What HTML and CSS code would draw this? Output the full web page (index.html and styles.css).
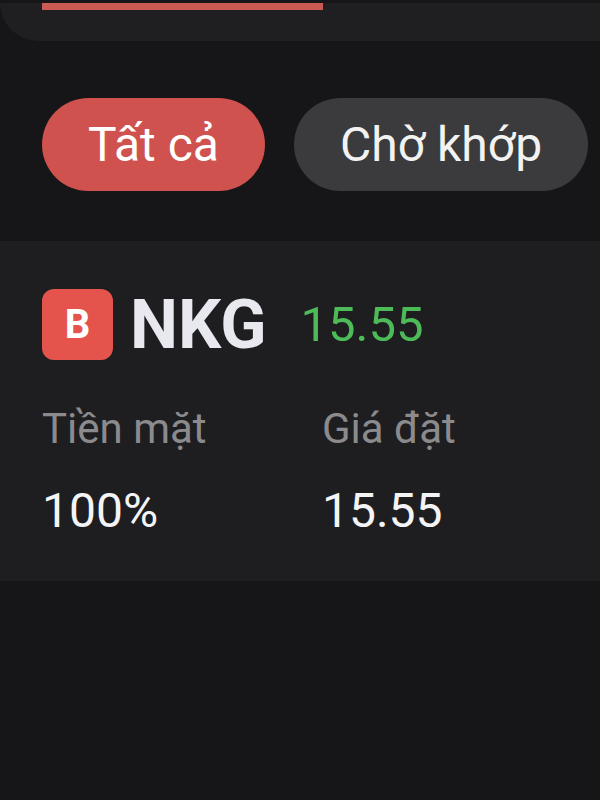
FILE: index.html
```html
<!DOCTYPE html>
<html lang="vi">
<head>
  <meta charset="UTF-8" />
  <meta name="viewport" content="width=device-width, initial-scale=1.0"/>
  <title>Lệnh đặt</title>
  <link rel="stylesheet" href="styles.css">
</head>
<body>
  <div class="tab-bar">
    <div class="tab-indicator"></div>
  </div>

  <div class="filters">
    <button class="pill active">Tất cả</button>
    <button class="pill">Chờ khớp</button>
  </div>

  <div class="order-card">
    <div class="order-head">
      <span class="side-badge">B</span>
      <span class="symbol">NKG</span>
      <span class="price">15.55</span>
    </div>
    <div class="order-grid">
      <div class="label">Tiền mặt</div>
      <div class="label">Giá đặt</div>
      <div class="value">100%</div>
      <div class="value">15.55</div>
    </div>
  </div>
</body>
</html>
```

FILE: styles.css
```css
body {
  font-family: Roboto, "Noto Sans", sans-serif;
  margin: 0;
  padding: 0;
  background: #161618;
  height: 800px;
  overflow: hidden;
}
.tab-bar {
  height: 38px;
  background: #1f1f22;
  border-bottom-left-radius: 40px;
  padding-left: 42px;
}
.tab-indicator {
  width: 281px;
  height: 7px;
  margin-top: 3px;
  background: #cb5a54;
}
.filters {
  display: flex;
  gap: 29px;
  padding: 57px 0 0 42px;
}
.pill {
  flex-shrink: 0;
  white-space: nowrap;
  height: 93px;
  padding: 0 46px;
  border: none;
  border-radius: 47px;
  background: #3b3b3d;
  color: #f2f2f2;
  font-family: Roboto, "Noto Sans", sans-serif;
  font-size: 48px;
  font-weight: 400;
  display: flex;
  align-items: center;
}
.pill.active {
  background: #cf524e;
  color: #fff;
}
.order-card {
  margin-top: 50px;
  background: #1e1e21;
  padding: 48px 42px 42px;
}
.order-head {
  display: flex;
  align-items: center;
  height: 71px;
}
.side-badge {
  width: 71px;
  height: 71px;
  border-radius: 12px;
  background: #e5534d;
  color: #fff;
  font-size: 40px;
  font-weight: 700;
  display: flex;
  align-items: center;
  justify-content: center;
}
.symbol {
  margin-left: 17px;
  font-size: 68px;
  font-weight: 700;
  line-height: 1;
  color: #e8e8ef;
}
.price {
  margin-left: 34px;
  font-size: 49px;
  line-height: 1;
  color: #4dbb58;
}
.order-grid {
  display: grid;
  grid-template-columns: 280px 1fr;
  row-gap: 29px;
  margin-top: 44px;
}
.label {
  font-size: 42px;
  line-height: 50px;
  color: #8b8b8e;
}
.value {
  font-size: 48px;
  line-height: 56px;
  font-weight: 400;
  color: #f4f4f6;
}
```
